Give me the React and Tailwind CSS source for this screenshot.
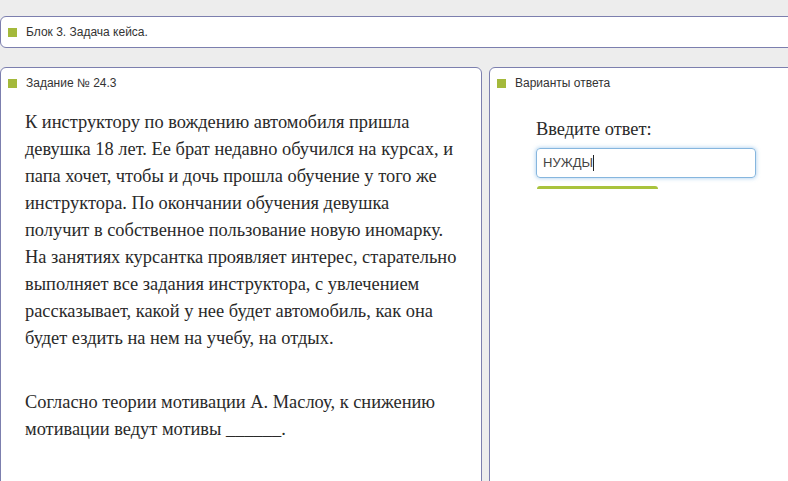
import React from "react";

const sans = { fontFamily: '"Liberation Sans", Arial, sans-serif' };
const serif = { fontFamily: '"Liberation Serif", "Times New Roman", serif' };

const Marker = () => <span className="inline-block w-[9px] h-[9px] bg-[#a4b93b] shrink-0" />;

const PanelTitle = ({ children }) => (
  <div className="flex items-center gap-[9px] h-[28px] pl-[7px] text-[12px] text-[#333]" style={sans}>
    <Marker />
    <span>{children}</span>
  </div>
);

const taskLines = [
  "К инструктору по вождению автомобиля пришла",
  "девушка 18 лет. Ее брат недавно обучился на курсах, и",
  "папа хочет, чтобы и дочь прошла обучение у того же",
  "инструктора. По окончании обучения девушка",
  "получит в собственное пользование новую иномарку.",
  "На занятиях курсантка проявляет интерес, старательно",
  "выполняет все задания инструктора, с увлечением",
  "рассказывает, какой у нее будет автомобиль, как она",
  "будет ездить на нем на учебу, на отдых.",
];

const App = () => {
  return (
    <div className="w-[788px] h-[481px] overflow-hidden bg-[#ededed] pt-[16px]">
      {/* top block bar */}
      <div className="w-[820px] h-[32px] bg-white border border-[#7c7fae] rounded-[6px] flex items-center">
        <div className="flex items-center gap-[9px] pl-[7px] text-[12px] text-[#333]" style={sans}>
          <Marker />
          <span>Блок 3. Задача кейса.</span>
        </div>
      </div>

      <div className="flex gap-[7px] mt-[19px] w-[820px]">
        {/* task panel */}
        <div className="w-[482px] h-[440px] shrink-0 bg-white border border-[#7c7fae] rounded-t-[6px] pt-[1px]">
          <PanelTitle>Задание № 24.3</PanelTitle>
          <div className="pl-[24px] pt-[12px] text-[18.4px] leading-[27px] text-[#2a2a2a] whitespace-nowrap" style={serif}>
            <p>
              {taskLines.map((l) => (
                <span key={l} className="block">{l}</span>
              ))}
            </p>
            <p className="mt-[37px]">
              <span className="block">Согласно теории мотивации А. Маслоу, к снижению</span>
              <span className="block">мотивации ведут мотивы ______.</span>
            </p>
          </div>
        </div>

        {/* answer panel */}
        <div className="flex-1 h-[440px] bg-white border border-[#7c7fae] rounded-t-[6px] pt-[1px]">
          <PanelTitle>Варианты ответа</PanelTitle>
          <div className="pl-[46px] pt-[20px]">
            <div className="text-[18.4px] leading-[24px] text-[#2a2a2a]" style={serif}>Введите ответ:</div>
            <div
              className="mt-[7px] w-[220px] h-[30px] rounded-[4px] border border-[#86b6de] shadow-[0_0_4px_rgba(82,156,222,0.55)] flex items-center pl-[6px] text-[13px] text-[#444]"
              style={sans}
            >
              <span>НУЖДЫ</span>
              <span className="w-[1px] h-[16px] bg-[#222]" />
            </div>
            <div className="mt-[8px] ml-[1px] w-[121px] h-[3px] rounded-t-[3px] bg-[#a9c33d]" />
          </div>
        </div>
      </div>
    </div>
  );
};

export default App;
